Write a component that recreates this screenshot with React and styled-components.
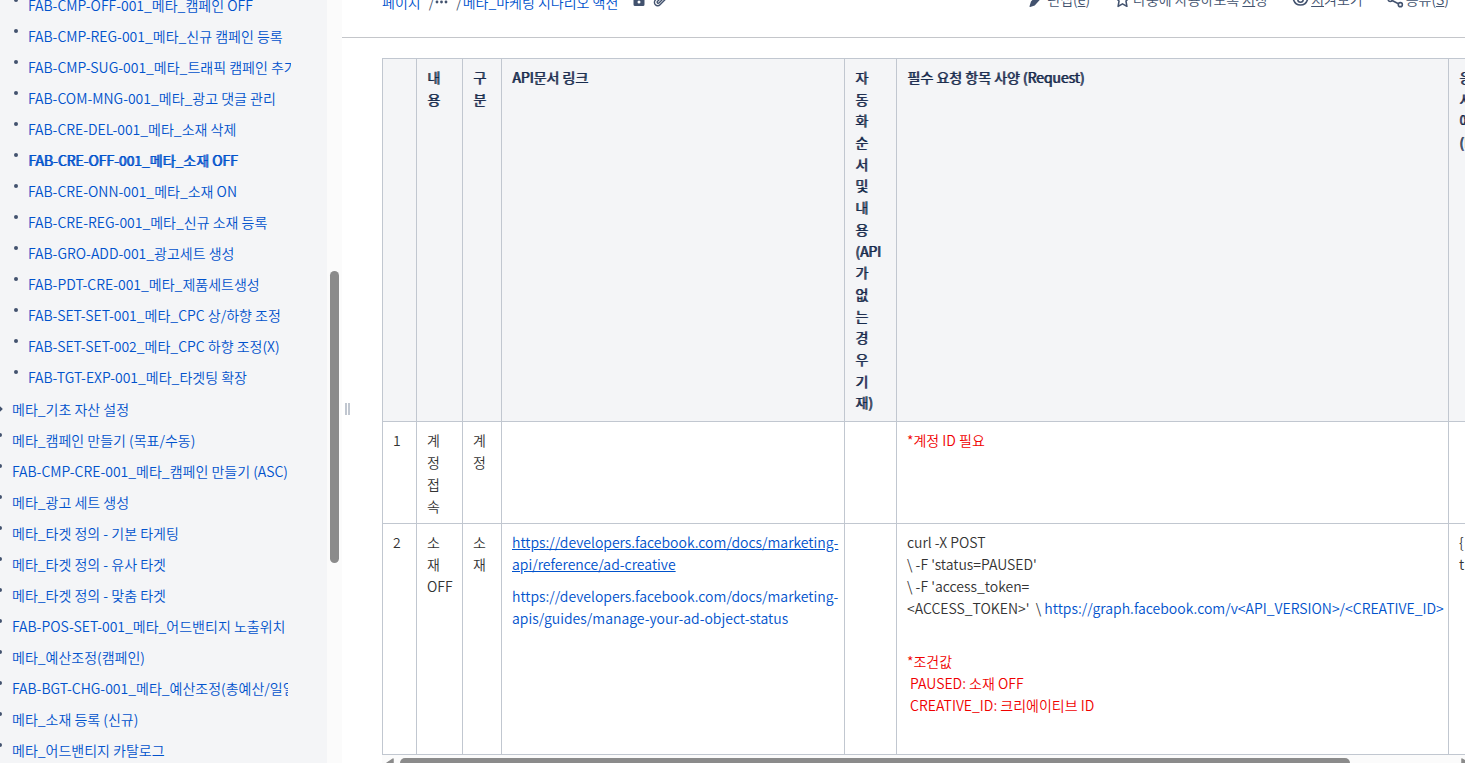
import React from 'react';
import styled, { createGlobalStyle } from 'styled-components';

const GlobalStyle = createGlobalStyle`
  * { box-sizing: border-box; }
  body {
    margin: 0;
    background: #fff;
    color: #333;
    font-family: "Noto Sans CJK KR", "Noto Sans", sans-serif;
    font-size: 14px;
    font-weight: 350;
    line-height: 22px;
  }
  a { color: #0052cc; text-decoration: none; }
`;

const Page = styled.div`
  display: flex;
  height: 100vh;
  overflow: hidden;
`;

const Sidebar = styled.nav`
  flex: 0 0 327px;
  overflow: hidden;
  background: #f4f5f7;
`;

const ScrolledTree = styled.div`
  margin-top: -11px;
`;

const TreeList = styled.ul`
  list-style: none;
  margin: 0;
  width: ${({ $nested }) => ($nested ? 291 : 288)}px;
  padding: ${({ $nested }) => ($nested ? '0 0 1px 16px' : '0')};
`;

const TreeItem = styled.li`
  display: flex;
  align-items: center;
  height: 31px;
  padding-left: 12px;
  position: relative;
  white-space: nowrap;
  clip-path: inset(0 0 0 -4px);

  &::before {
    content: "";
    position: absolute;
    top: ${({ $branch }) => ($branch ? 14 : 9)}px;
    left: -2px;
    width: 4px;
    height: 4px;
    border-radius: ${({ $branch }) => ($branch ? '0' : '50%')};
    transform: ${({ $branch }) => ($branch ? 'rotate(45deg)' : 'none')};
    background: #42526e;
  }
`;

const TreeLink = styled.a`
  text-shadow: ${({ $current }) => ($current ? '1px 0 0 currentColor' : 'none')};
`;

const ScrollTrack = styled.div`
  flex: 0 0 15px;
  padding: 271px 3px 0;
  background: #fbfbfb;
`;

const ScrollThumb = styled.div`
  height: 292px;
  border-radius: 5px;
  background: #8b8b8b;
`;

const Splitter = styled.div`
  flex: 0 0 10px;
  display: flex;
  justify-content: center;
  gap: 1px;
  padding-top: 403px;

  &::before, &::after {
    content: "";
    width: 2px;
    height: 12px;
    background: #c1c7d0;
  }
`;

const Main = styled.main`
  flex: 1;
  min-width: 0;
  margin-left: -10px;
`;

const TopBar = styled.header`
  display: flex;
  justify-content: space-between;
  height: 38px;
  padding: 0 16px 0 40px;
  overflow: hidden;
  border-bottom: 1px solid #c4c6ca;
`;

const Breadcrumbs = styled.div`
  display: flex;
  align-items: center;
  gap: 8px;
  height: 22px;
  margin-top: -9px;
  color: #42526e;
  white-space: nowrap;
`;

const Crumb = styled.div`
  display: flex;
  align-items: center;
  gap: 1px;
`;

const PageMarks = styled.div`
  display: flex;
  align-items: center;
  gap: 8px;
  height: 22px;
  margin: -4px 0 0 7px;
`;

const Actions = styled.div`
  display: flex;
  align-items: center;
  gap: 24px;
  height: 22px;
  margin-top: -12px;
  white-space: nowrap;
`;

const IconButton = styled.button`
  display: flex;
  align-items: center;
  gap: 2px;
  padding: 0;
  border: 0;
  background: none;
  color: #42526e;
  font: inherit;
`;

const TableArea = styled.section`
  margin: 20px 0 0 40px;
  overflow: hidden;
`;

const SpecTable = styled.table`
  width: 1203px;
  table-layout: fixed;
  border-collapse: collapse;
`;

const Cell = styled.td`
  padding: 7px 10px 6px;
  border: 1px solid #c1c7d0;
  vertical-align: top;
  text-align: left;
`;

const HeadCell = styled.th`
  padding: 8px 10px 7px;
  border: 1px solid #c1c7d0;
  background: #f4f5f7;
  color: #172b4d;
  font-weight: 350;
  line-height: 1.55;
  text-align: left;
  text-shadow: 1px 0 0 currentColor;
  vertical-align: top;
`;

const StackedLabel = styled.div`
  width: 1em;
`;

const Para = styled.p`
  margin: 0 0 ${({ $space }) => $space || 0}px;
  color: ${({ $red }) => ($red ? '#f00000' : 'inherit')};
  white-space: ${({ $pre }) => ($pre ? 'pre' : 'normal')};
`;

const DocLink = styled.a`
  text-decoration: ${({ $underlined }) => ($underlined ? 'underline' : 'none')};
`;

const HScroll = styled.div`
  display: flex;
  align-items: flex-start;
  gap: 6px;
  height: 15px;
  margin-left: 40px;
  padding: 3px 0 0 4px;
  overflow: hidden;
  background: #fbfbfb;
`;

const HThumb = styled.div`
  flex: 0 0 88%;
  height: 10px;
  border-radius: 5px;
  background: #8b8b8b;
`;

const EndArrow = styled.div`
  margin: 0 -4px 0 auto;
  transform: scaleX(-1);
`;

const Arrow = () => (
  <svg width="8" height="10" viewBox="0 0 8 10" display="block" aria-hidden="true">
    <path d="M7 1v8L1 5z" fill="#8b8b8b" stroke="#8b8b8b" strokeWidth="1.5" strokeLinejoin="round" />
  </svg>
);

const DotsIcon = () => (
  <svg width="13" height="4" viewBox="0 0 13 4" aria-hidden="true">
    <circle cx="2" cy="2" r="1.4" fill="currentColor" />
    <circle cx="6.5" cy="2" r="1.4" fill="currentColor" />
    <circle cx="11" cy="2" r="1.4" fill="currentColor" />
  </svg>
);

const LockIcon = () => (
  <svg width="12" height="16" viewBox="0 0 12 16" aria-hidden="true">
    <path d="M3.2 7V4.2a2.8 2.8 0 0 1 5.6 0V7" fill="none" stroke="currentColor" strokeWidth="1.6" />
    <path fillRule="evenodd" d="M2 6h8a1.5 1.5 0 0 1 1.5 1.5v5A1.5 1.5 0 0 1 10 14H2a1.5 1.5 0 0 1-1.5-1.5v-5A1.5 1.5 0 0 1 2 6zm4 2.6a1.5 1.5 0 1 0 0 3 1.5 1.5 0 0 0 0-3z" fill="currentColor" />
  </svg>
);

const ClipIcon = () => (
  <svg width="14" height="16" viewBox="0 0 14 16" fill="none" stroke="currentColor" strokeWidth="1.4" strokeLinecap="round" aria-hidden="true">
    <path d="M12.5 7.2 7 12.7a3.2 3.2 0 0 1-4.6 0 3.2 3.2 0 0 1 0-4.6L8 2.6a2.2 2.2 0 0 1 3.2 3.1L6 10.9a1 1 0 0 1-1.6-1.4l4.4-4.4" />
  </svg>
);

const ActionIcon = ({ filled, children }) => (
  <svg
    width="17"
    height="18"
    viewBox="0 0 15 16"
    fill={filled ? 'currentColor' : 'none'}
    stroke={filled ? 'none' : 'currentColor'}
    strokeWidth="1.4"
    strokeLinejoin="round"
    aria-hidden="true"
  >
    {children}
  </svg>
);

const PencilIcon = () => (
  <ActionIcon filled>
    <path d="M10.3 2.2a1 1 0 0 1 1.4 0l1.9 1.9a1 1 0 0 1 0 1.4l-1.2 1.2-3.3-3.3zM8.3 4.2l3.3 3.3-5.7 6.3-4 1.2a.5.5 0 0 1-.6-.6l1.3-4.2z" />
  </ActionIcon>
);

const StarIcon = () => (
  <ActionIcon>
    <path d="m7.5 1.8 1.9 4.2 4.4.6-3.2 3.2.8 4.7-3.9-2.2-3.9 2.2.8-4.7-3.2-3.2 4.4-.6z" />
  </ActionIcon>
);

const EyeIcon = () => (
  <ActionIcon>
    <path d="M1.2 8.5c1-3.2 3.3-5.2 6.3-5.2s5.3 2 6.3 5.2c-1 3-3.3 4.9-6.3 4.9s-5.3-1.9-6.3-4.9z" />
    <circle cx="7.5" cy="8.5" r="2.4" />
  </ActionIcon>
);

const ShareIcon = () => (
  <ActionIcon>
    <circle cx="2.8" cy="8.5" r="1.8" />
    <circle cx="11.8" cy="4" r="1.8" />
    <circle cx="11.8" cy="13" r="1.8" />
    <path d="m4.5 7.7 5.6-2.9M4.5 9.3l5.6 2.9" />
  </ActionIcon>
);

const nestedPages = [
  'FAB-CMP-OFF-001_메타_캠페인 OFF',
  'FAB-CMP-REG-001_메타_신규 캠페인 등록',
  'FAB-CMP-SUG-001_메타_트래픽 캠페인 추가',
  'FAB-COM-MNG-001_메타_광고 댓글 관리',
  'FAB-CRE-DEL-001_메타_소재 삭제',
  'FAB-CRE-OFF-001_메타_소재 OFF',
  'FAB-CRE-ONN-001_메타_소재 ON',
  'FAB-CRE-REG-001_메타_신규 소재 등록',
  'FAB-GRO-ADD-001_광고세트 생성',
  'FAB-PDT-CRE-001_메타_제품세트생성',
  'FAB-SET-SET-001_메타_CPC 상/하향 조정',
  'FAB-SET-SET-002_메타_CPC 하향 조정(X)',
  'FAB-TGT-EXP-001_메타_타겟팅 확장',
];

const pages = [
  '메타_기초 자산 설정',
  '메타_캠페인 만들기 (목표/수동)',
  'FAB-CMP-CRE-001_메타_캠페인 만들기 (ASC)',
  '메타_광고 세트 생성',
  '메타_타겟 정의 - 기본 타게팅',
  '메타_타겟 정의 - 유사 타겟',
  '메타_타겟 정의 - 맞춤 타겟',
  'FAB-POS-SET-001_메타_어드밴티지 노출위치',
  '메타_예산조정(캠페인)',
  'FAB-BGT-CHG-001_메타_예산조정(총예산/일일)',
  '메타_소재 등록 (신규)',
  '메타_어드밴티지 카탈로그',
];

const currentPage = 'FAB-CRE-OFF-001_메타_소재 OFF';
const columnWidths = [34, 46, 39, 343, 52, 552, 137];

export default function App() {
  return (
    <Page>
      <GlobalStyle />
      <Sidebar>
        <ScrolledTree>
          <TreeList $nested>
            {nestedPages.map((title) => (
              <TreeItem key={title}>
                <TreeLink href="#" $current={title === currentPage}>{title}</TreeLink>
              </TreeItem>
            ))}
          </TreeList>
          <TreeList>
            {pages.map((title, i) => (
              <TreeItem key={title} $branch={i === 0}>
                <TreeLink href="#">{title}</TreeLink>
              </TreeItem>
            ))}
          </TreeList>
        </ScrolledTree>
      </Sidebar>
      <ScrollTrack><ScrollThumb /></ScrollTrack>
      <Splitter />
      <Main>
        <TopBar>
          <Breadcrumbs>
            <a href="#">페이지</a>
            <Crumb>
              <span>/</span>
              <IconButton aria-label="더 보기"><DotsIcon /></IconButton>
            </Crumb>
            <Crumb>
              <span>/</span>
              <a href="#">메타_마케팅 시나리오 액션</a>
            </Crumb>
            <PageMarks><LockIcon /><ClipIcon /></PageMarks>
          </Breadcrumbs>
          <Actions>
            <IconButton><PencilIcon /><span>편집(<u>e</u>)</span></IconButton>
            <IconButton><StarIcon /><span>나중에 사용하도록 <u>저</u>장</span></IconButton>
            <IconButton><EyeIcon /><span><u>지</u>켜보기</span></IconButton>
            <IconButton><ShareIcon /><span>공유(<u>S</u>)</span></IconButton>
          </Actions>
        </TopBar>
        <TableArea>
          <SpecTable>
            <colgroup>{columnWidths.map((w, i) => <col key={i} width={w} />)}</colgroup>
            <thead>
              <tr>
                <HeadCell scope="col" />
                <HeadCell scope="col">내용</HeadCell>
                <HeadCell scope="col">구분</HeadCell>
                <HeadCell scope="col">API문서 링크</HeadCell>
                <HeadCell scope="col"><StackedLabel>자동화 순서 및 내용 (API가 없는 경우 기재)</StackedLabel></HeadCell>
                <HeadCell scope="col">필수 요청 항목 사양 (Request)</HeadCell>
                <HeadCell scope="col">응답<br />사양<br />예시<br />(Response)</HeadCell>
              </tr>
            </thead>
            <tbody>
              <tr>
                <Cell>1</Cell>
                <Cell>계정접속</Cell>
                <Cell>계정</Cell>
                <Cell />
                <Cell />
                <Cell><Para $red>*계정 ID 필요</Para></Cell>
                <Cell />
              </tr>
              <tr>
                <Cell>2</Cell>
                <Cell>소재OFF</Cell>
                <Cell>소재</Cell>
                <Cell>
                  <Para $space={10}>
                    <DocLink $underlined href="#">https://developers.facebook.com/docs/marketing-api/reference/ad-creative</DocLink>
                  </Para>
                  <Para>
                    <DocLink href="#">https://developers.facebook.com/docs/marketing-apis/guides/manage-your-ad-object-status</DocLink>
                  </Para>
                </Cell>
                <Cell />
                <Cell>
                  <Para $pre $space={31}>
                    {"curl -X POST\n\\ -F 'status=PAUSED'\n\\ -F 'access_token=\n<ACCESS_TOKEN>'  \\ "}
                    <DocLink href="#">{'https://graph.facebook.com/v<API_VERSION>/<CREATIVE_ID>'}</DocLink>
                  </Para>
                  <Para $pre $red $space={32}>{'*조건값\n PAUSED: 소재 OFF\n CREATIVE_ID: 크리에이티브 ID'}</Para>
                </Cell>
                <Cell>{'{ "success":'}<br />{'true }'}</Cell>
              </tr>
            </tbody>
          </SpecTable>
        </TableArea>
        <HScroll>
          <Arrow />
          <HThumb />
          <EndArrow><Arrow /></EndArrow>
        </HScroll>
      </Main>
    </Page>
  );
}
